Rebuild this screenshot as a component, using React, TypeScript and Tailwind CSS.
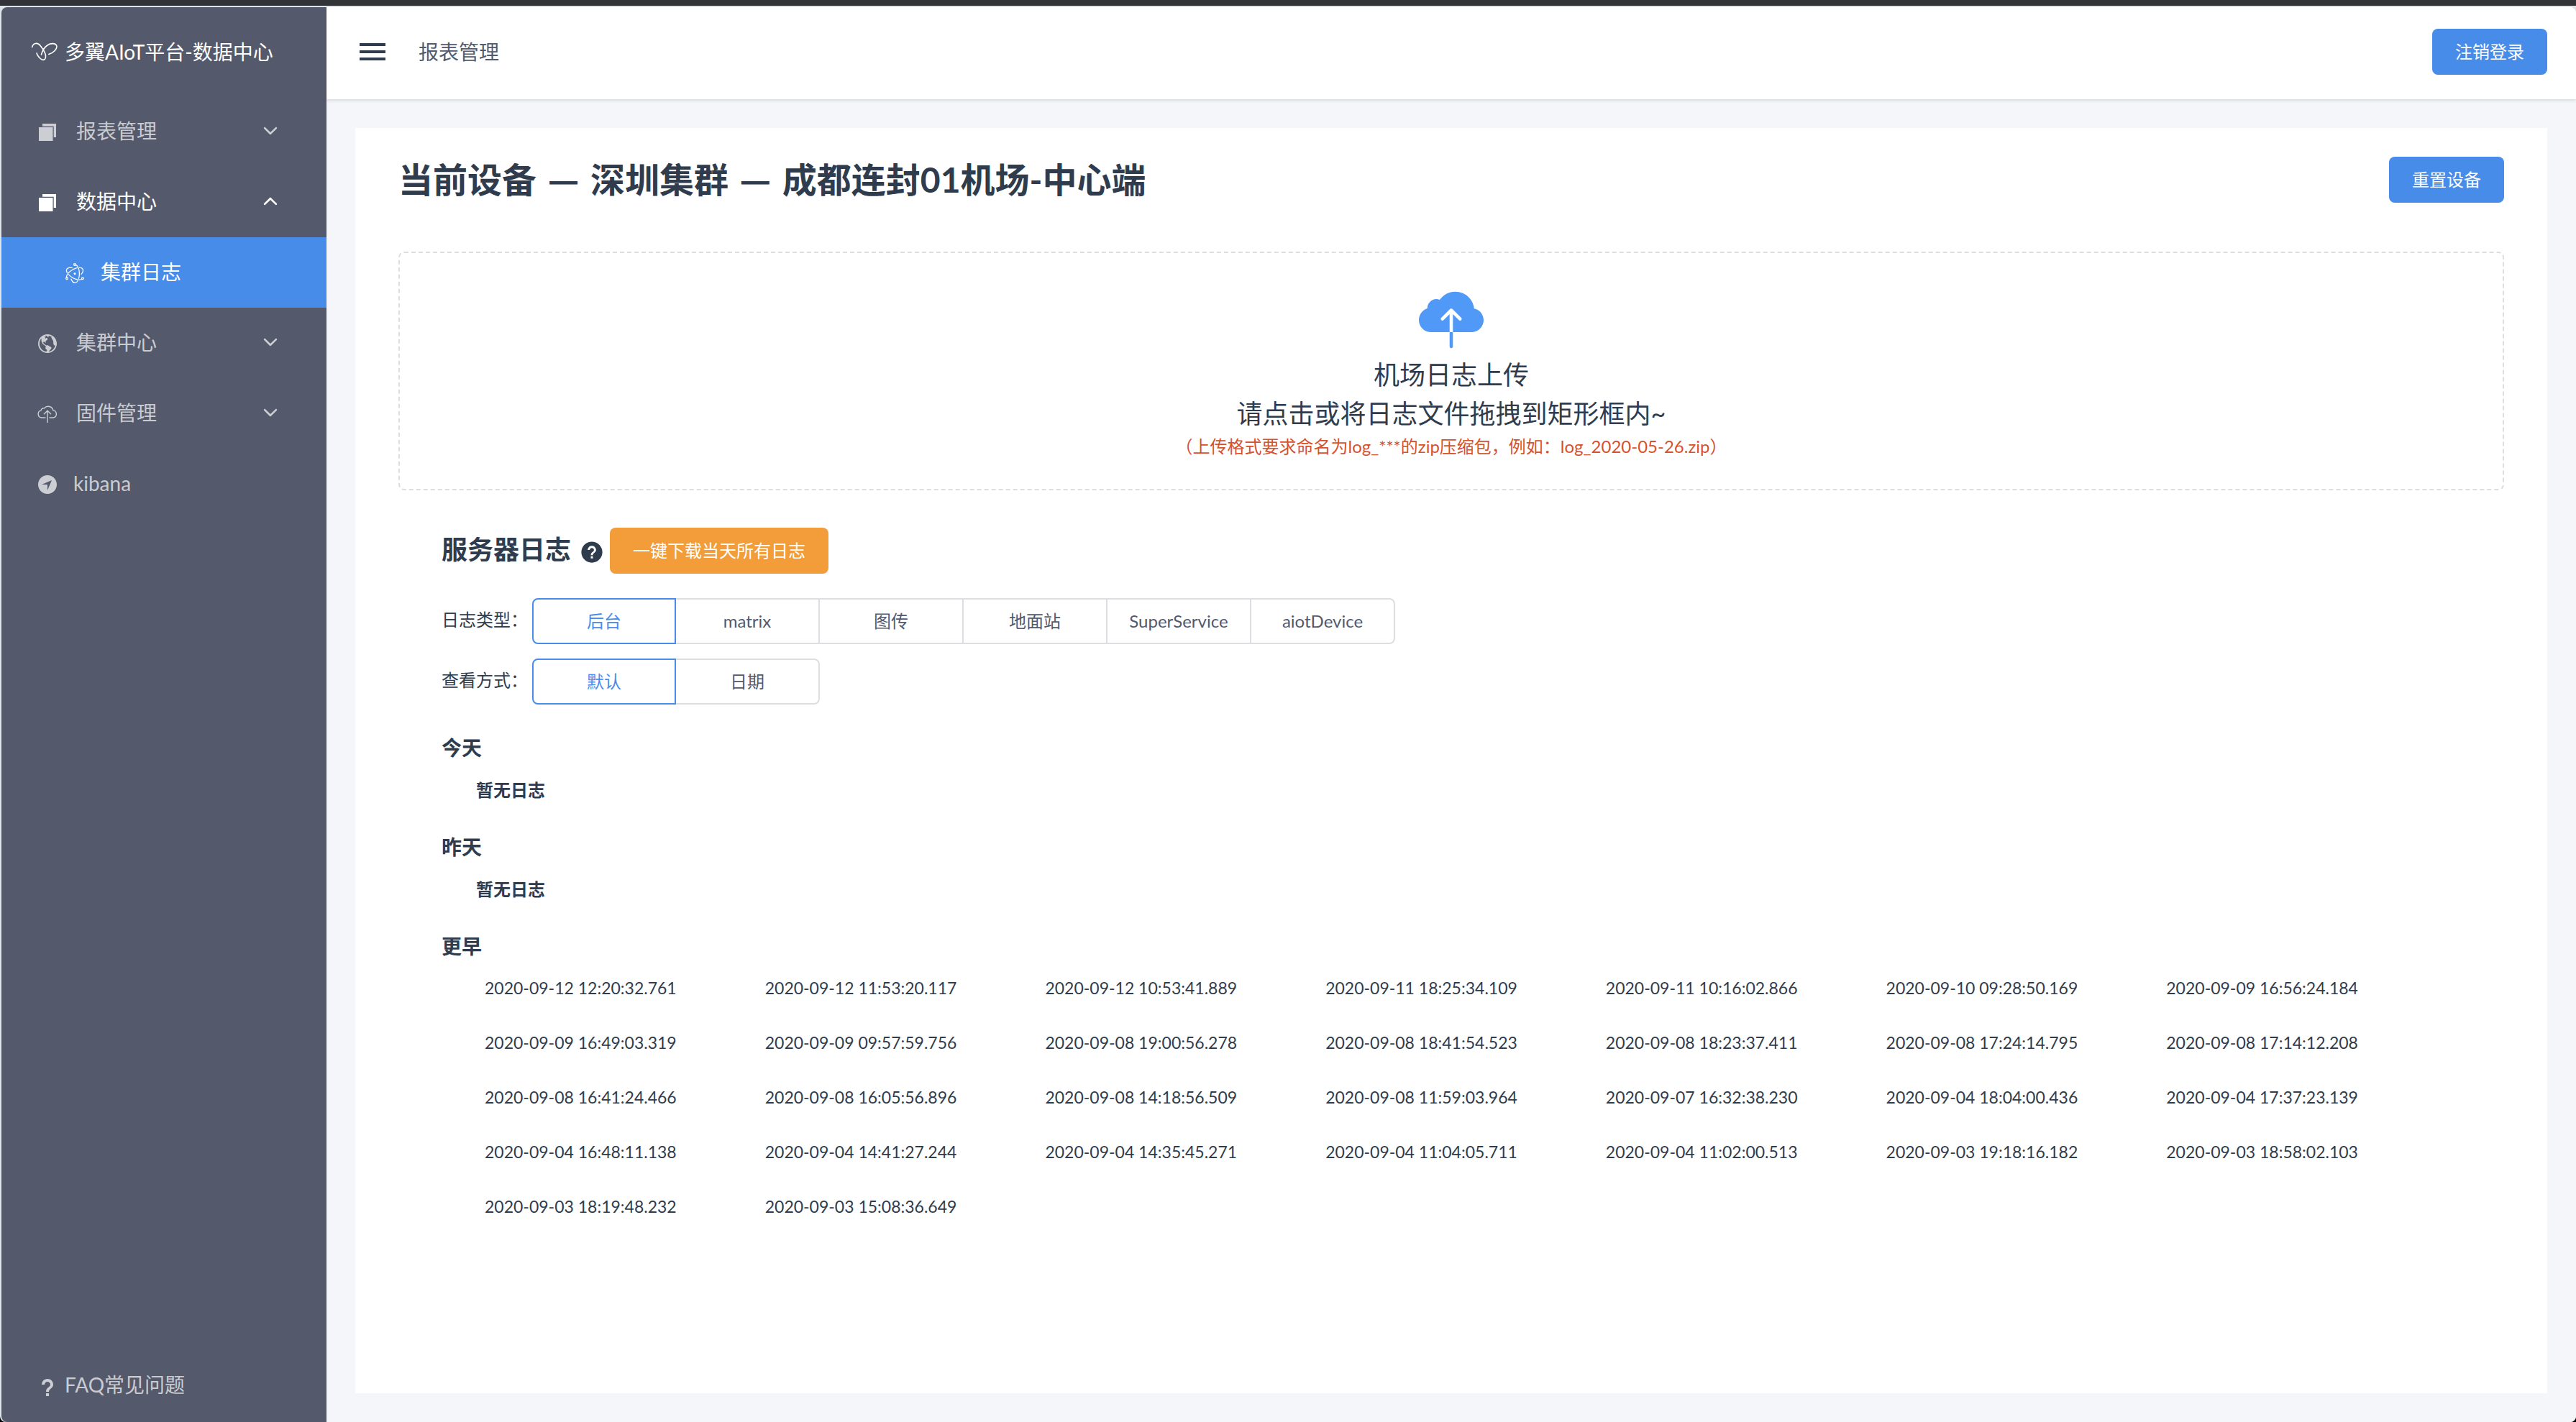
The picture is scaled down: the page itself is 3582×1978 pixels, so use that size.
import type { ReactNode } from 'react';
import {
  IoIosArrowDown,
  IoIosArrowUp,
  IoIosCloudUpload,
  IoIosNavigate,
  IoMdGlobe,
  IoMdHelp,
  IoMdHelpCircle,
  IoMdMenu,
} from 'react-icons/io';
import { IoLogoElectron } from 'react-icons/io5';

const logTypes = ['后台', 'matrix', '图传', '地面站', 'SuperService', 'aiotDevice'];
const viewModes = ['默认', '日期'];

const earlierLogs = [
  '2020-09-12 12:20:32.761',
  '2020-09-12 11:53:20.117',
  '2020-09-12 10:53:41.889',
  '2020-09-11 18:25:34.109',
  '2020-09-11 10:16:02.866',
  '2020-09-10 09:28:50.169',
  '2020-09-09 16:56:24.184',
  '2020-09-09 16:49:03.319',
  '2020-09-09 09:57:59.756',
  '2020-09-08 19:00:56.278',
  '2020-09-08 18:41:54.523',
  '2020-09-08 18:23:37.411',
  '2020-09-08 17:24:14.795',
  '2020-09-08 17:14:12.208',
  '2020-09-08 16:41:24.466',
  '2020-09-08 16:05:56.896',
  '2020-09-08 14:18:56.509',
  '2020-09-08 11:59:03.964',
  '2020-09-07 16:32:38.230',
  '2020-09-04 18:04:00.436',
  '2020-09-04 17:37:23.139',
  '2020-09-04 16:48:11.138',
  '2020-09-04 14:41:27.244',
  '2020-09-04 14:35:45.271',
  '2020-09-04 11:04:05.711',
  '2020-09-04 11:02:00.513',
  '2020-09-03 19:18:16.182',
  '2020-09-03 18:58:02.103',
  '2020-09-03 18:19:48.232',
  '2020-09-03 15:08:36.649',
];

function LogoIcon() {
  return (
    <svg viewBox="40 60 112 84" className="h-7 w-9" fill="none" stroke="currentColor" strokeLinecap="round">
      <path strokeWidth="5" d="M42 82C46 64 66 60 78 76C92 96 104 112 100 128C96 142 84 138 76 130C68 122 63 114 62 108" />
      <path strokeWidth="5" d="M114 113C136 106 152 88 148 76C144 64 122 64 108 74C94 84 86 98 82 114" />
    </svg>
  );
}

function SheetsIcon() {
  return (
    <svg viewBox="0 0 24 24" className="size-6" fill="currentColor">
      <path d="M0 5H19.5V24H0Z" />
      <path d="M5 0H24V19H20.7V3.8H5Z" />
    </svg>
  );
}

function CloudOutlineIcon() {
  return (
    <svg viewBox="0 0 28 24" className="h-6 w-7" fill="none" stroke="currentColor" strokeWidth="1.4">
      <path d="M11.5 17H6A5.2 5.2 0 0 1 5 6.8A3.6 3.6 0 0 1 9.6 3.9A7 7 0 0 1 21.9 6.9A5.1 5.1 0 0 1 22 17H16.5" />
      <path d="M14 24V7.5M9 12.2L14 7.3L19 12.2" />
    </svg>
  );
}

type MenuItemProps = {
  icon: ReactNode;
  label: string;
  state?: 'open' | 'closed';
};

function MenuItem({ icon, label, state }: MenuItemProps) {
  const tone = state === 'open' ? 'text-white' : 'text-white/70';
  return (
    <button type="button" className={`flex h-[98px] w-full items-center pr-16 pb-0.5 pl-[50px] text-[28px] ${tone}`}>
      <span className="flex w-7 shrink-0 justify-center pt-1">{icon}</span>
      <span className={state ? 'ml-[26px]' : 'ml-[22px]'}>{label}</span>
      {state === 'closed' && <IoIosArrowDown className="ml-auto size-7" />}
      {state === 'open' && <IoIosArrowUp className="ml-auto size-7" />}
    </button>
  );
}

function Sidebar() {
  return (
    <aside className="flex w-[452px] shrink-0 flex-col rounded-tl-lg rounded-bl-lg bg-[#545a6c]">
      <div className="flex h-[124px] items-center pl-[42px] text-[28px] text-white">
        <LogoIcon />
        <span className="ml-2.5">多翼AIoT平台-数据中心</span>
      </div>
      <nav>
        <MenuItem icon={<SheetsIcon />} label="报表管理" state="closed" />
        <MenuItem icon={<SheetsIcon />} label="数据中心" state="open" />
        <a href="#logs" className="flex h-[98px] items-center bg-[#488cea] pb-0.5 pl-[86px] text-[28px] text-white">
          <IoLogoElectron className="mt-1 size-8" />
          <span className="ml-5">集群日志</span>
        </a>
        <MenuItem icon={<IoMdGlobe className="size-8 shrink-0" />} label="集群中心" state="closed" />
        <MenuItem icon={<CloudOutlineIcon />} label="固件管理" state="closed" />
        <MenuItem icon={<IoIosNavigate className="size-8 shrink-0" />} label="kibana" />
      </nav>
      <a href="#faq" className="mt-auto flex h-[102px] items-center pb-0.5 pl-12 text-[28px] text-white/70">
        <IoMdHelp className="mt-2 size-8" />
        <span className="ml-2">FAQ常见问题</span>
      </a>
    </aside>
  );
}

function PrimaryButton({ children }: { children: ReactNode }) {
  return (
    <button type="button" className="h-16 rounded-lg bg-[#488cea] px-8 text-[24px] text-white">
      {children}
    </button>
  );
}

function Dash() {
  return <span className="mx-1 font-['Noto_Sans_CJK_SC',sans-serif]">—</span>;
}

function OptionRow({ name, label, options }: { name: string; label: string; options: string[] }) {
  return (
    <div role="radiogroup" aria-labelledby={name} className="flex h-16 items-center">
      <span id={name} className="w-[126px] shrink-0 pb-1 text-[24px]">
        {label}
      </span>
      <div className="flex">
        {options.map((option, index) => (
          <label
            key={option}
            className="flex h-16 w-[200px] items-center justify-center border-y-2 border-r-2 border-[#dcdee2] text-[24px] text-[#515a6e] first:rounded-l-lg first:border-l-2 last:rounded-r-lg has-checked:border-[#488cea] has-checked:text-[#488cea]"
          >
            <input type="radio" name={name} defaultChecked={index === 0} className="sr-only" />
            {option}
          </label>
        ))}
      </div>
    </div>
  );
}

function EmptyDay({ title }: { title: string }) {
  return (
    <section className="mt-10">
      <h3 className="text-[28px] leading-10 font-bold">{title}</h3>
      <p className="mt-5 pl-12 text-[24px] leading-[38px] font-bold">暂无日志</p>
    </section>
  );
}

export default function App() {
  return (
    <div className="flex min-h-screen flex-col bg-black font-['Lato','Noto_Sans_CJK_SC',sans-serif] text-[#2f3c4e]">
      <div className="h-2 bg-[#323337]" />
      <div className="flex flex-1 rounded-b-lg border-t-2 border-l-2 border-[#dfe4e8] bg-[#dfe4e8]">
        <Sidebar />
        <div className="flex min-w-0 flex-1 flex-col rounded-tr-lg rounded-br-lg bg-[#f4f6f9]">
          <header className="flex h-32 items-center rounded-tr-lg bg-white pr-10 pb-1 pl-10 shadow-[0_2px_4px_rgba(0,0,0,0.12)]">
            <button type="button" aria-label="menu">
              <IoMdMenu className="size-12" />
            </button>
            <span className="ml-10 text-[28px] text-[#515a6e]">报表管理</span>
            <div className="ml-auto">
              <PrimaryButton>注销登录</PrimaryButton>
            </div>
          </header>

          <main className="m-10 flex-1 bg-white px-15 pt-10 pb-10">
            <div className="flex h-16 items-center justify-between">
              <h1 className="pb-1 text-[48px] leading-16 font-bold">
                当前设备 <Dash /> 深圳集群 <Dash /> 成都连封01机场-中心端
              </h1>
              <PrimaryButton>重置设备</PrimaryButton>
            </div>

            <button
              type="button"
              className="mt-[68px] flex w-full flex-col items-center rounded-lg border-2 border-dashed border-[#dcdee2] pt-12 pb-10"
            >
              <IoIosCloudUpload className="mb-1 size-[90px] text-[#5099f7]" />
              <span className="text-[36px] leading-[54px]">机场日志上传</span>
              <span className="text-[36px] leading-[54px]">请点击或将日志文件拖拽到矩形框内~</span>
              <span className="text-[24px] leading-[38px] text-[#d4522e]">
                （上传格式要求命名为log_***的zip压缩包，例如：log_2020-05-26.zip）
              </span>
            </button>

            <div id="logs" className="mt-[52px] px-15">
              <div className="flex h-16 items-center">
                <h2 className="pb-1 text-[36px] font-bold">服务器日志</h2>
                <IoMdHelpCircle className="mt-1 ml-[11px] size-9" />
                <button type="button" className="ml-[7px] h-16 rounded-lg bg-[#f29d39] px-8 text-[24px] text-white">
                  一键下载当天所有日志
                </button>
              </div>

              <div className="mt-[34px] flex flex-col gap-5">
                <OptionRow name="log-type" label="日志类型：" options={logTypes} />
                <OptionRow name="view-mode" label="查看方式：" options={viewModes} />
              </div>

              <EmptyDay title="今天" />
              <EmptyDay title="昨天" />

              <section className="mt-10">
                <h3 className="text-[28px] leading-10 font-bold">更早</h3>
                <ul className="mx-10 grid grid-cols-7">
                  {earlierLogs.map((log) => (
                    <li key={log} className="flex h-[76px] items-center pt-px pl-5 text-[23px]">
                      <a href="#log">{log}</a>
                    </li>
                  ))}
                </ul>
              </section>
            </div>
          </main>
        </div>
      </div>
    </div>
  );
}
